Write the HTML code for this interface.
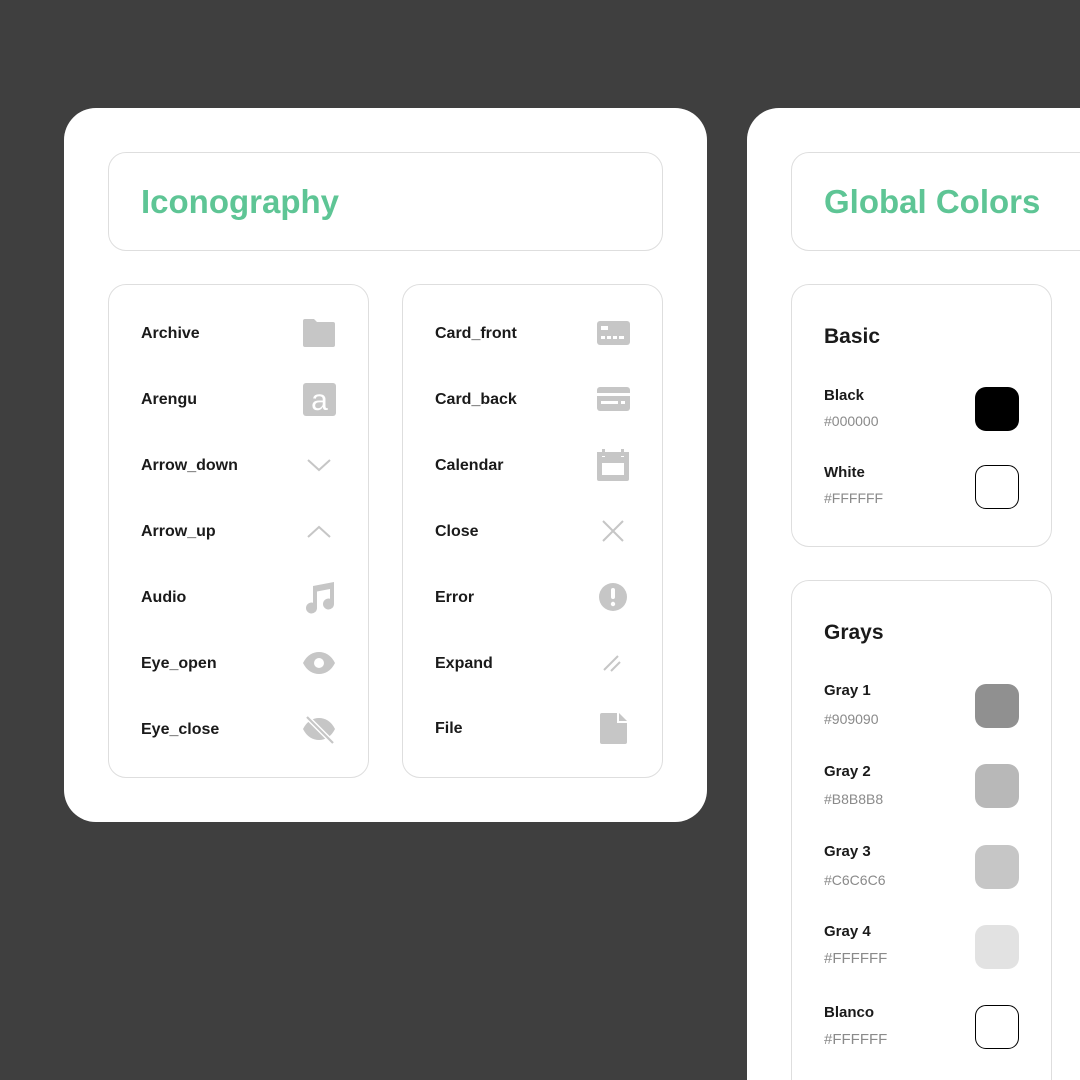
<!DOCTYPE html>
<html style="overflow:hidden;width:1080px;height:1080px"><head><meta charset="utf-8"><style>
*{margin:0;padding:0;box-sizing:border-box}
body{width:1080px;height:1080px;background:#3f3f3f;position:relative;overflow:hidden;font-family:"Liberation Sans",sans-serif;color:#1a1a1a}
.card{position:absolute;background:#fff;border-radius:32px}
.box{position:absolute;border:1.5px solid #dedede;border-radius:18px;background:#fff}
.t{position:absolute;white-space:nowrap}
.title{font-size:33px;font-weight:700;color:#5ec595;line-height:40px}
.lbl{font-size:16px;font-weight:700;line-height:18px}
.h{font-size:21px;font-weight:700;line-height:24px}
.cl{font-size:15px;font-weight:700;line-height:18px}
.hx{font-size:14px;color:#8a8a8a;line-height:16px}
.sw{position:absolute;width:44px;height:44px;border-radius:11px;left:975px}
svg.i{position:absolute;width:34px;height:34px}
</style></head><body>
<div class="card" style="left:64px;top:108px;width:643px;height:714px"></div>
<div class="card" style="left:747px;top:108px;width:400px;height:972px;border-bottom-left-radius:0;border-bottom-right-radius:0"></div>

<div class="box" style="left:108px;top:152px;width:555px;height:99px"></div>
<div class="t title" style="left:141px;top:182px">Iconography</div>
<div class="box" style="left:108px;top:284px;width:261px;height:494px"></div>
<div class="box" style="left:402px;top:284px;width:261px;height:494px"></div>

<div class="t lbl" style="left:141px;top:325px">Archive</div>
<div class="t lbl" style="left:141px;top:391px">Arengu</div>
<div class="t lbl" style="left:141px;top:457px">Arrow_down</div>
<div class="t lbl" style="left:141px;top:523px">Arrow_up</div>
<div class="t lbl" style="left:141px;top:589px">Audio</div>
<div class="t lbl" style="left:141px;top:655px">Eye_open</div>
<div class="t lbl" style="left:141px;top:721px">Eye_close</div>
<div class="t lbl" style="left:435px;top:325px">Card_front</div>
<div class="t lbl" style="left:435px;top:391px">Card_back</div>
<div class="t lbl" style="left:435px;top:457px">Calendar</div>
<div class="t lbl" style="left:435px;top:523px">Close</div>
<div class="t lbl" style="left:435px;top:589px">Error</div>
<div class="t lbl" style="left:435px;top:655px">Expand</div>
<div class="t lbl" style="left:435px;top:720px">File</div>

<svg class="i" style="left:302px;top:316px" viewBox="0 0 34 34" fill="#c6c6c6"><path d="M1 5a2 2 0 0 1 2-2h9l3 3h16a2 2 0 0 1 2 2v21a2 2 0 0 1-2 2H3a2 2 0 0 1-2-2z"/></svg>
<svg class="i" style="left:302px;top:382px" viewBox="0 0 34 34"><rect x="1" y="1" width="33" height="33" rx="3" fill="#c6c6c6"/><text x="17.5" y="28" text-anchor="middle" font-family="Liberation Sans" font-size="30" fill="#fff">a</text></svg>
<svg class="i" style="left:302px;top:448px" viewBox="0 0 34 34" fill="none" stroke="#c6c6c6" stroke-width="2"><path d="M6 12l11 10 11-10"/></svg>
<svg class="i" style="left:302px;top:514px" viewBox="0 0 34 34" fill="none" stroke="#c6c6c6" stroke-width="2"><path d="M6 23l11-10 11 10"/></svg>
<svg class="i" style="left:302px;top:580px" viewBox="0 0 34 34" fill="#c6c6c6"><path d="M11 6l21-4v22a5.5 5.5 0 1 1-4-5.3V9l-13 2.5V28a5.5 5.5 0 1 1-4-5.3z"/></svg>
<svg class="i" style="left:302px;top:646px" viewBox="0 0 34 34"><path d="M1 17C5 9 11 6 17 6s12 3 16 11c-4 8-10 11-16 11S5 25 1 17z" fill="#c6c6c6"/><circle cx="17" cy="17" r="5" fill="#fff"/></svg>
<svg class="i" style="left:302px;top:712px" viewBox="0 0 34 34"><path d="M1 17C5 9 11 6 17 6s12 3 16 11c-4 8-10 11-16 11S5 25 1 17z" fill="#c6c6c6"/><path d="M5 5l26 26" stroke="#fff" stroke-width="5"/><path d="M5 5l26 26" stroke="#c6c6c6" stroke-width="2.2"/></svg>

<svg class="i" style="left:596px;top:316px" viewBox="0 0 34 34" fill="#c6c6c6"><rect x="1" y="5" width="33" height="24" rx="3"/><g fill="#fff"><rect x="5" y="10" width="7" height="4"/><rect x="5" y="20" width="4" height="3"/><rect x="11" y="20" width="4" height="3"/><rect x="17" y="20" width="4" height="3"/><rect x="23" y="20" width="5" height="3"/></g></svg>
<svg class="i" style="left:596px;top:382px" viewBox="0 0 34 34" fill="#c6c6c6"><rect x="1" y="5" width="33" height="24" rx="3"/><g fill="#fff"><rect x="1" y="11" width="33" height="3"/><rect x="5" y="19" width="17" height="3"/><rect x="25" y="19" width="4" height="3"/></g></svg>
<svg class="i" style="left:596px;top:448px" viewBox="0 0 34 34" fill="#c6c6c6"><path d="M1 4h5v5h3V4h16v5h3V4h5v27a2 2 0 0 1-2 2H3a2 2 0 0 1-2-2z"/><rect x="6" y="15" width="22" height="12" fill="#fff"/><rect x="6" y="1" width="3" height="7"/><rect x="25" y="1" width="3" height="7"/></svg>
<svg class="i" style="left:596px;top:514px" viewBox="0 0 34 34" fill="none" stroke="#c6c6c6" stroke-width="2"><path d="M7 7l20 20M27 7L7 27"/></svg>
<svg class="i" style="left:596px;top:580px" viewBox="0 0 34 34"><circle cx="17" cy="17" r="14" fill="#c6c6c6"/><rect x="15" y="8" width="4" height="11" rx="2" fill="#fff"/><circle cx="17" cy="24" r="2.2" fill="#fff"/></svg>
<svg class="i" style="left:596px;top:646px" viewBox="0 0 34 34" fill="none" stroke="#c6c6c6" stroke-width="2"><path d="M8 24L22 10M15 25l9-9"/></svg>
<svg class="i" style="left:596px;top:711px" viewBox="0 0 34 34" fill="#c6c6c6"><path d="M6 2h15v10h10v19a2 2 0 0 1-2 2H6a2 2 0 0 1-2-2V4a2 2 0 0 1 2-2z"/><path d="M23 2l8 8h-8z"/></svg>

<div class="box" style="left:791px;top:152px;width:320px;height:99px"></div>
<div class="t title" style="left:824px;top:182px">Global Colors</div>

<div class="box" style="left:791px;top:284px;width:261px;height:263px"></div>
<div class="t h" style="left:824px;top:325px">Basic</div>
<div class="t cl" style="left:824px;top:387px">Black</div>
<div class="t hx" style="left:824px;top:413px">#000000</div>
<div class="sw" style="top:387px;background:#000"></div>
<div class="t cl" style="left:824px;top:464px">White</div>
<div class="t hx" style="left:824px;top:490px">#FFFFFF</div>
<div class="sw" style="top:465px;background:#fff;border:1.5px solid #000"></div>

<div class="box" style="left:791px;top:580px;width:261px;height:520px"></div>
<div class="t h" style="left:824px;top:621px">Grays</div>
<div class="t cl" style="left:824px;top:682px">Gray 1</div>
<div class="t hx" style="left:824px;top:711px">#909090</div>
<div class="sw" style="top:684px;background:#909090"></div>
<div class="t cl" style="left:824px;top:763px">Gray 2</div>
<div class="t hx" style="left:824px;top:791px">#B8B8B8</div>
<div class="sw" style="top:764px;background:#b8b8b8"></div>
<div class="t cl" style="left:824px;top:843px">Gray 3</div>
<div class="t hx" style="left:824px;top:872px">#C6C6C6</div>
<div class="sw" style="top:845px;background:#c6c6c6"></div>
<div class="t cl" style="left:824px;top:923px">Gray 4</div>
<div class="t hx" style="left:824px;top:951px;font-size:15px">#FFFFFF</div>
<div class="sw" style="top:925px;background:#e2e2e2"></div>
<div class="t cl" style="left:824px;top:1004px">Blanco</div>
<div class="t hx" style="left:824px;top:1032px;font-size:15px">#FFFFFF</div>
<div class="sw" style="top:1005px;background:#fff;border:1.5px solid #000"></div>
</body></html>
